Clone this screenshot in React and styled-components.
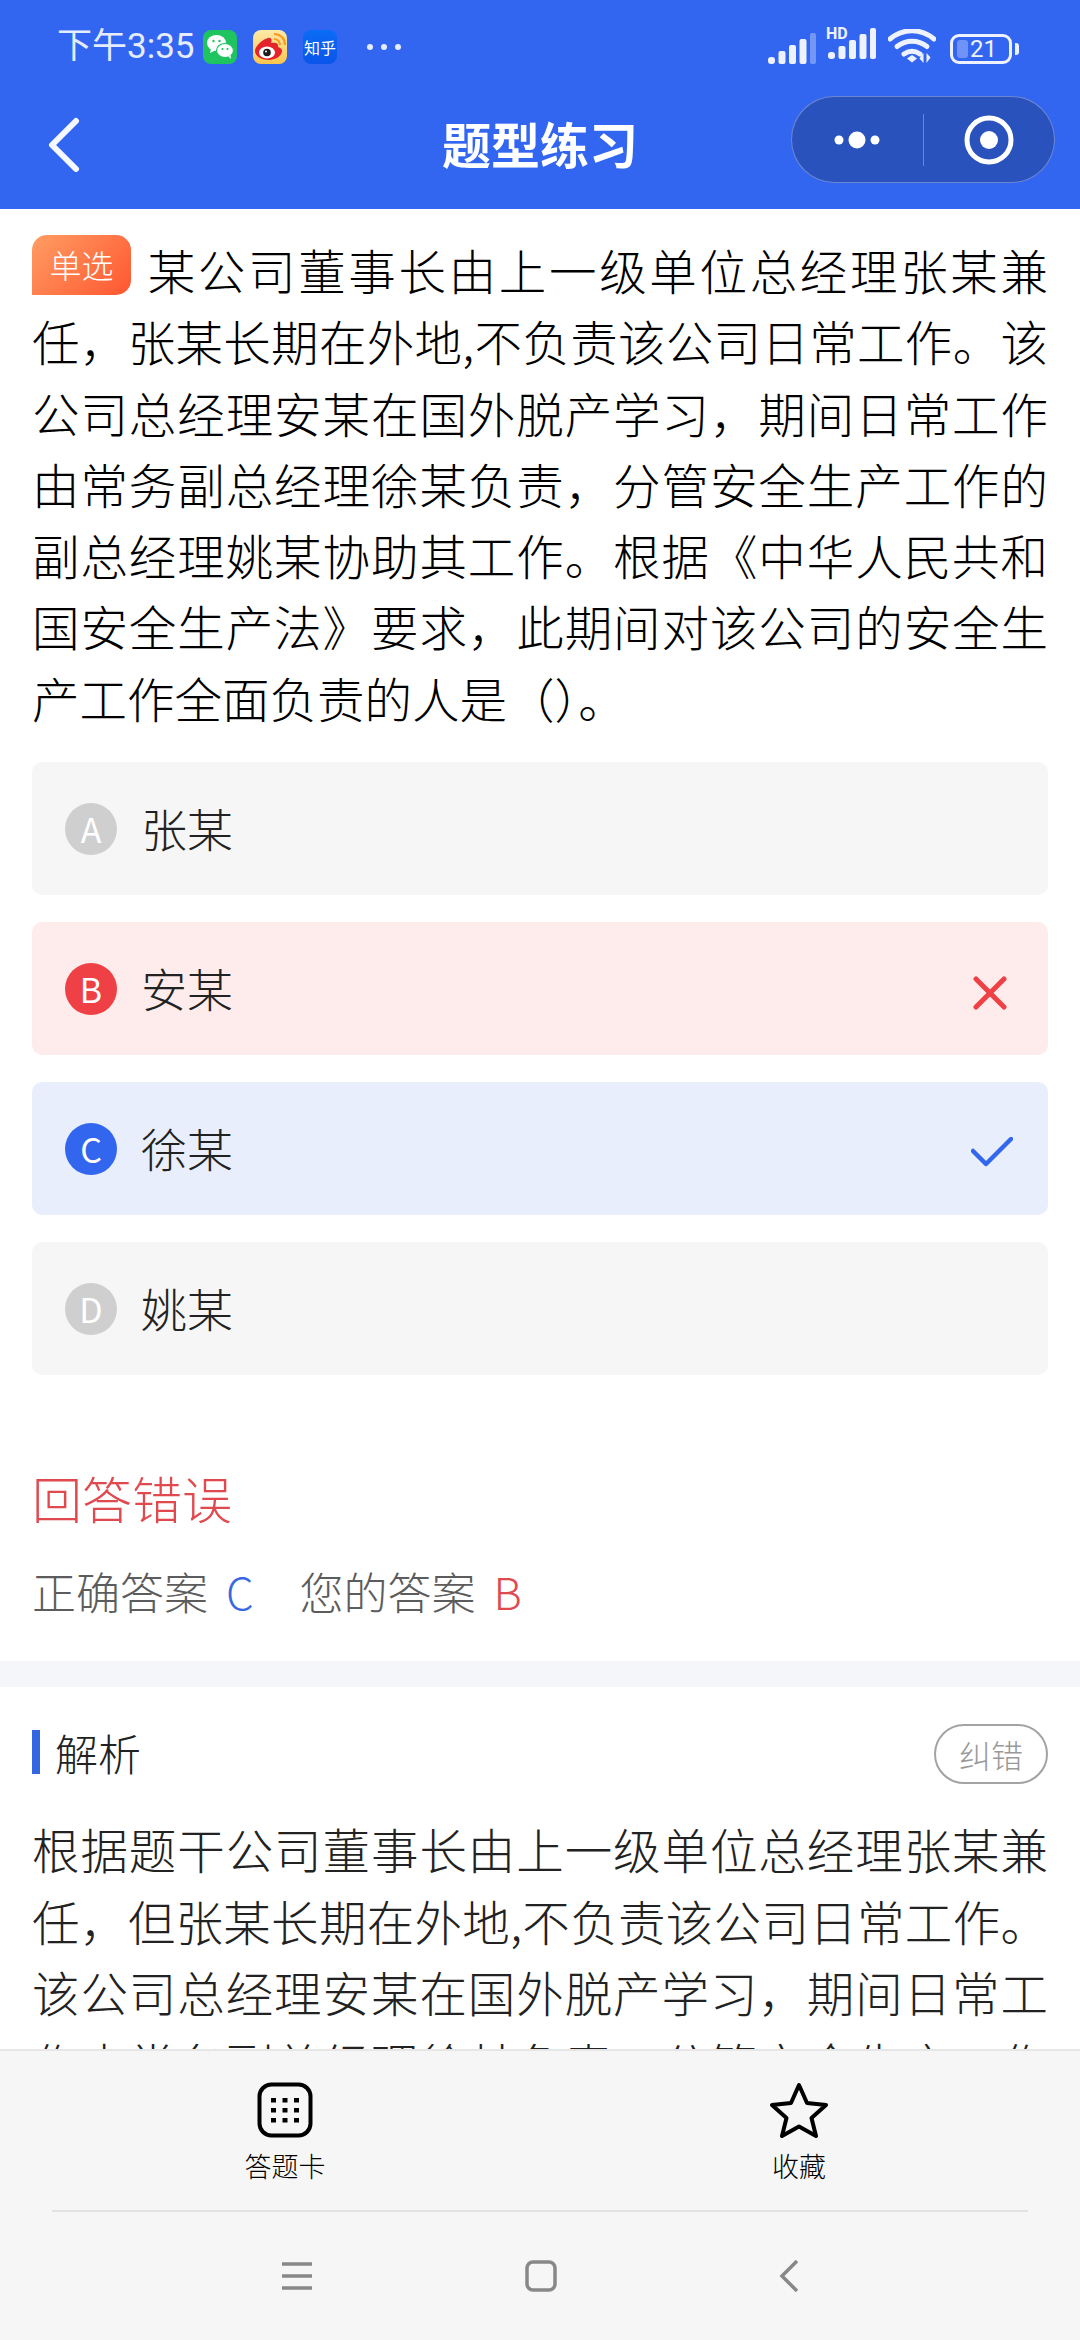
import React from "react";
import styled, { createGlobalStyle } from "styled-components";

const QUESTION =
  "某公司董事长由上一级单位总经理张某兼任，张某长期在外地,不负责该公司日常工作。该公司总经理安某在国外脱产学习，期间日常工作由常务副总经理徐某负责，分管安全生产工作的副总经理姚某协助其工作。根据《中华人民共和国安全生产法》要求，此期间对该公司的安全生产工作全面负责的人是（）。";
const ANALYSIS =
  "根据题干公司董事长由上一级单位总经理张某兼任，但张某长期在外地,不负责该公司日常工作。该公司总经理安某在国外脱产学习，期间日常工作由常务副总经理徐某负责，分管安全生产工作的副总经理姚某协助其工作。";

const OPTIONS = [
  { key: "A", text: "张某", state: "idle" },
  { key: "B", text: "安某", state: "wrong" },
  { key: "C", text: "徐某", state: "right" },
  { key: "D", text: "姚某", state: "idle" },
];

const optionBg = { idle: "#f6f6f6", wrong: "#feecec", right: "#e8eefb" };
const badgeBg = { idle: "#cfcfcf", wrong: "#ee4045", right: "#3366ee" };

function SignalIcon({ faded }) {
  return (
    <svg width="48" height="31" viewBox="0 0 48 31">
      <g fill="#eef2ff">
        <rect x="0" y="24" width="7" height="7" rx="3" />
        <rect x="10.500" y="18" width="7" height="13" rx="2" />
        <rect x="21" y="12" width="7" height="19" rx="2" />
        <rect x="31.500" y="6" width="7" height="25" rx="2" />
        <rect x="42" y="0" width="6" height="31" rx="2" opacity={faded ? 0.35 : 1} />
      </g>
    </svg>
  );
}

function App() {
  return (
    <Page>
      <GlobalStyle />
      <Header>
        <StatusBar>
          <StatusLeft>
            <Time>下午3:35</Time>
            <AppIcons>
              <AppIcon $bg="#1fc461">
                <svg width="34" height="34" viewBox="0 0 34 34">
                  <ellipse cx="13.500" cy="13" rx="9.500" ry="8" fill="#fff" />
                  <path d="M8 19l-1 4 5-2.500z" fill="#fff" />
                  <ellipse cx="22" cy="20.500" rx="8.500" ry="7" fill="#fff" stroke="#1fc461" strokeWidth="1.200" />
                  <path d="M25 26l3 3-.500-4z" fill="#fff" />
                  <circle cx="10.500" cy="11" r="1.200" fill="#1fc461" />
                  <circle cx="16.500" cy="11" r="1.200" fill="#1fc461" />
                  <circle cx="19.500" cy="19" r="1.100" fill="#1fc461" />
                  <circle cx="24.500" cy="19" r="1.100" fill="#1fc461" />
                </svg>
              </AppIcon>
              <AppIcon $bg="linear-gradient(180deg,#fde9a8,#fbc64c)">
                <svg width="34" height="34" viewBox="0 0 34 34">
                  <path d="M2 21c0-5 8-12 13-13 4-1 4 3 3 5 4-1 8 0 7 4 3 1 4 2 4 4 0 5-7 9-13 9-8 0-14-4-14-9z" fill="#e5232a" />
                  <ellipse cx="14" cy="22.500" rx="8" ry="6" fill="#fff" />
                  <circle cx="14" cy="22.500" r="3.800" fill="#1c1c1c" />
                  <circle cx="13" cy="21.500" r="1" fill="#fff" />
                  <path d="M21 9c3.500 0 6 2.500 6 6M21 4c6.500 0 11 4.500 11 11" stroke="#f59a23" strokeWidth="2.200" fill="none" />
                </svg>
              </AppIcon>
              <AppIcon $bg="linear-gradient(180deg,#0a6cf5,#0a55ea)">
                <ZhihuText>知乎</ZhihuText>
              </AppIcon>
            </AppIcons>
            <StatusDots>
              <i />
              <i />
              <i />
            </StatusDots>
          </StatusLeft>
          <StatusRight>
            <SignalIcon faded />
            <HdSignal>
              <HdLabel>HD</HdLabel>
              <SignalIcon />
            </HdSignal>
            <svg width="48" height="35" viewBox="0 0 48 35">
              <path d="M2 10c13-11 31-11 44 0" stroke="#eef2ff" strokeWidth="5" fill="none" strokeLinecap="round" />
              <path d="M9 17.500c9-7 21-7 30 0" stroke="#eef2ff" strokeWidth="5" fill="none" strokeLinecap="round" />
              <path d="M16 25c5-3.500 11-3.500 16 0" stroke="#eef2ff" strokeWidth="5" fill="none" strokeLinecap="round" />
              <path d="M19 29.500l5-3.500 5 3.500-5 4z" fill="#eef2ff" />
              <path d="M35.500 24v10l-4-4.500zM38.500 34V24l4 4.500z" fill="#eef2ff" />
            </svg>
            <Battery>
              <BatteryFill />
              <BatteryText>21</BatteryText>
              <BatteryTip />
            </Battery>
          </StatusRight>
        </StatusBar>
        <NavBar>
          <BackButton>
            <svg width="34" height="56" viewBox="0 0 34 56">
              <path d="M29 4L5 28l24 24" stroke="#f6f8ff" strokeWidth="6" fill="none" strokeLinecap="round" strokeLinejoin="round" />
            </svg>
          </BackButton>
          <Title>题型练习</Title>
          <Capsule>
            <CapsuleSide>
              <svg width="46" height="20" viewBox="0 0 46 20">
                <circle cx="5" cy="10" r="4.500" fill="#fff" />
                <circle cx="23" cy="10" r="8.500" fill="#fff" />
                <circle cx="41" cy="10" r="4.500" fill="#fff" />
              </svg>
            </CapsuleSide>
            <CapsuleDivider />
            <CapsuleSide>
              <svg width="50" height="50" viewBox="0 0 50 50">
                <circle cx="25" cy="25" r="22" stroke="#fff" strokeWidth="5" fill="none" />
                <circle cx="25" cy="25" r="9" fill="#fff" />
              </svg>
            </CapsuleSide>
          </Capsule>
        </NavBar>
      </Header>

      <QuestionBlock>
        <QuestionText>
          <Tag>单选</Tag>
          {QUESTION}
        </QuestionText>
        <OptionList>
          {OPTIONS.map((o) => (
            <Option key={o.key} $state={o.state}>
              <Badge $state={o.state}>{o.key}</Badge>
              <OptionText>{o.text}</OptionText>
              {o.state === "wrong" && (
                <ResultIcon $right={6} $top={9}>
                  <svg width="34" height="34" viewBox="0 0 34 34">
                    <path d="M3 3l28 28M31 3L3 31" stroke="#ee4045" strokeWidth="5" fill="none" strokeLinecap="round" />
                  </svg>
                </ResultIcon>
              )}
              {o.state === "right" && (
                <ResultIcon $right={0} $top={6}>
                  <svg width="42" height="30" viewBox="0 0 42 30">
                    <path d="M2 14l13 13L40 2" stroke="#3366ee" strokeWidth="4.500" fill="none" strokeLinecap="round" strokeLinejoin="round" />
                  </svg>
                </ResultIcon>
              )}
            </Option>
          ))}
        </OptionList>
      </QuestionBlock>

      <ResultBlock>
        <ResultTitle>回答错误</ResultTitle>
        <AnswerRow>
          <AnswerLabel>正确答案</AnswerLabel>
          <AnswerValue $color="#3a68e0">C</AnswerValue>
          <AnswerLabel>您的答案</AnswerLabel>
          <AnswerValue $color="#e04a4f">B</AnswerValue>
        </AnswerRow>
      </ResultBlock>

      <Strip />

      <AnalysisBlock>
        <AnalysisHead>
          <AnalysisTitle>解析</AnalysisTitle>
          <ReportButton>纠错</ReportButton>
        </AnalysisHead>
        <AnalysisText>{ANALYSIS}</AnalysisText>
      </AnalysisBlock>

      <BottomPanel>
        <ActionRow>
          <ActionItem>
            <svg width="56" height="56" viewBox="0 0 56 56">
              <rect x="2.500" y="2.500" width="51" height="51" rx="12" stroke="#000" strokeWidth="4" fill="none" />
              <g fill="#000">
                {[16, 26, 36].map((y) =>
                  [14, 25.500, 37].map((x) => <rect key={`${x}-${y}`} x={x} y={y} width="5" height="4.500" />)
                )}
              </g>
            </svg>
            <ActionLabel>答题卡</ActionLabel>
          </ActionItem>
          <ActionItem>
            <svg width="58" height="56" viewBox="0 0 58 56">
              <path
                d="M29 3l8 18 19 2-14.500 13L46 54 29 44.500 12 54l4.500-18L2 23l19-2z"
                stroke="#000"
                strokeWidth="4"
                fill="none"
                strokeLinejoin="round"
              />
            </svg>
            <ActionLabel>收藏</ActionLabel>
          </ActionItem>
        </ActionRow>
        <PanelRule />
        <SystemNav>
          <svg width="30" height="28" viewBox="0 0 30 28">
            <path d="M0 2h30M0 14h30M0 26h30" stroke="#888" strokeWidth="3.500" />
          </svg>
          <svg width="32" height="32" viewBox="0 0 32 32">
            <rect x="2" y="2" width="28" height="28" rx="6" stroke="#888" strokeWidth="3.500" fill="none" />
          </svg>
          <svg width="20" height="32" viewBox="0 0 20 32">
            <path d="M18 1L3 16l15 15" stroke="#888" strokeWidth="3.500" fill="none" />
          </svg>
        </SystemNav>
      </BottomPanel>
    </Page>
  );
}

const GlobalStyle = createGlobalStyle`
  html, body {
    margin: 0;
    padding: 0;
    background: #fff;
  }
  * {
    box-sizing: border-box;
  }
`;

const Page = styled.div`
  width: 1080px;
  height: 2340px;
  overflow: hidden;
  background: #fff;
  display: flex;
  flex-direction: column;
  font-family: "Noto Sans CJK SC", "Noto Sans", sans-serif;
`;

const Header = styled.header`
  flex: none;
  height: 209px;
  background: #3366f0;
  display: flex;
  flex-direction: column;
`;

const StatusBar = styled.div`
  height: 96px;
  padding: 30px 68px 0 57px;
  display: flex;
  justify-content: space-between;
  align-items: flex-start;
`;

const StatusLeft = styled.div`
  display: flex;
  align-items: center;
  height: 34px;
`;

const Time = styled.span`
  width: 146px;
  font-family: Roboto, "Noto Sans CJK SC", sans-serif;
  font-size: 35px;
  line-height: 34px;
  color: #e6ecff;
  white-space: nowrap;
`;

const AppIcons = styled.div`
  display: flex;
  gap: 16px;
`;

const AppIcon = styled.div`
  width: 34px;
  height: 34px;
  border-radius: 8px;
  overflow: hidden;
  background: ${(p) => p.$bg};
  display: flex;
  align-items: center;
  justify-content: center;
`;

const ZhihuText = styled.span`
  font-size: 16px;
  line-height: 1;
  color: #fff;
  white-space: nowrap;
`;

const StatusDots = styled.div`
  display: flex;
  gap: 8px;
  margin-left: 30px;
  i {
    width: 6px;
    height: 6px;
    border-radius: 50%;
    background: #e6ecff;
  }
`;

const StatusRight = styled.div`
  display: flex;
  align-items: flex-end;
  height: 34px;
  gap: 12px;
`;

const HdSignal = styled.div`
  position: relative;
`;

const HdLabel = styled.span`
  position: absolute;
  left: -2px;
  top: -1px;
  font-family: Roboto, sans-serif;
  font-size: 16px;
  font-weight: 700;
  line-height: 13px;
  color: #eef2ff;
`;

const Battery = styled.div`
  position: relative;
  width: 62px;
  height: 30px;
  margin-left: 2px;
  border: 3px solid #eef2ff;
  border-radius: 9px;
  display: flex;
  align-items: center;
  padding-left: 4px;
`;

const BatteryFill = styled.div`
  width: 11px;
  height: 18px;
  border-radius: 3px;
  background: #6f93f6;
`;

const BatteryText = styled.span`
  margin-left: 2px;
  font-family: Roboto, sans-serif;
  font-size: 24px;
  line-height: 24px;
  color: #eef2ff;
`;

const BatteryTip = styled.span`
  position: absolute;
  right: -10px;
  top: 6px;
  width: 4px;
  height: 12px;
  border-radius: 0 3px 3px 0;
  background: #eef2ff;
`;

const NavBar = styled.div`
  flex: 1;
  position: relative;
  display: flex;
  align-items: flex-start;
  justify-content: space-between;
  padding-right: 25px;
`;

const BackButton = styled.div`
  margin: 21px 0 0 47px;
  line-height: 0;
`;

const Title = styled.h1`
  position: absolute;
  left: 0;
  right: 0;
  top: 12px;
  margin: 0;
  text-align: center;
  font-size: 49px;
  line-height: 70px;
  font-weight: 700;
  color: #fff;
  pointer-events: none;
`;

const Capsule = styled.div`
  width: 264px;
  height: 87px;
  border-radius: 44px;
  background: #2a52bd;
  border: 1px solid rgba(255, 255, 255, 0.3);
  display: flex;
  align-items: center;
`;

const CapsuleSide = styled.div`
  flex: 1;
  display: flex;
  align-items: center;
  justify-content: center;
  line-height: 0;
`;

const CapsuleDivider = styled.div`
  width: 1px;
  height: 52px;
  background: rgba(255, 255, 255, 0.3);
`;

const QuestionBlock = styled.section`
  flex: none;
  padding: 25px 32px 0;
`;

const QuestionText = styled.p`
  margin: 0;
  font-size: 47.500px;
  font-weight: 300;
  line-height: 71.300px;
  color: #000;
  text-align: justify;
`;

const Tag = styled.span`
  display: inline-block;
  width: 99px;
  height: 60px;
  margin-right: 14px;
  border-radius: 15px 15px 15px 0;
  background: linear-gradient(135deg, #ff9d63, #ff5630);
  color: #fff;
  font-size: 32px;
  line-height: 58px;
  text-align: center;
  vertical-align: 12px;
`;

const OptionList = styled.div`
  margin-top: 29px;
  display: flex;
  flex-direction: column;
  gap: 27px;
`;

const Option = styled.div`
  height: 133px;
  padding: 0 35px 0 33px;
  border-radius: 10px;
  background: ${(p) => optionBg[p.$state]};
  display: flex;
  align-items: center;
`;

const Badge = styled.span`
  width: 52px;
  height: 52px;
  border-radius: 50%;
  background: ${(p) => badgeBg[p.$state]};
  color: #fff;
  font-size: 34px;
  line-height: 52px;
  text-align: center;
`;

const OptionText = styled.span`
  margin: 0 0 4px 24px;
  font-size: 46px;
  font-weight: 300;
  line-height: 60px;
  color: #222;
`;

const ResultIcon = styled.span`
  margin-left: auto;
  margin-right: ${(p) => p.$right}px;
  margin-top: ${(p) => p.$top}px;
  line-height: 0;
`;

const ResultBlock = styled.section`
  flex: none;
  padding: 88px 32px 0;
  height: 286px;
`;

const ResultTitle = styled.div`
  font-size: 50px;
  font-weight: 300;
  line-height: 68px;
  color: #e04a4f;
`;

const AnswerRow = styled.div`
  margin-top: 28px;
  display: flex;
  align-items: center;
  font-size: 44px;
  font-weight: 300;
  line-height: 64px;
`;

const AnswerLabel = styled.span`
  color: #5c5c5c;
`;

const AnswerValue = styled.span`
  margin: 0 46px 0 18px;
  color: ${(p) => p.$color};
`;

const Strip = styled.div`
  flex: none;
  height: 26px;
  background: #f4f6f9;
`;

const AnalysisBlock = styled.section`
  flex: 1;
  min-height: 0;
  overflow: hidden;
  padding: 37px 32px 0;
`;

const AnalysisHead = styled.div`
  display: flex;
  align-items: center;
  justify-content: space-between;
  height: 60px;
`;

const AnalysisTitle = styled.h2`
  margin: 0 0 4px;
  padding-left: 15px;
  border-left: 8px solid #3366e0;
  font-size: 43px;
  line-height: 44px;
  font-weight: 300;
  color: #222;
`;

const ReportButton = styled.div`
  width: 114px;
  height: 60px;
  border: 2px solid #a3a3a3;
  border-radius: 30px;
  color: #999;
  font-size: 32px;
  font-weight: 300;
  line-height: 56px;
  text-align: center;
`;

const AnalysisText = styled.p`
  margin: 29px 0 0;
  font-size: 47.500px;
  font-weight: 300;
  line-height: 71.500px;
  color: #222;
  text-align: justify;
`;

const BottomPanel = styled.footer`
  flex: none;
  height: 291px;
  background: #f6f6f6;
  border-top: 2px solid #e6e6e6;
`;

const ActionRow = styled.div`
  height: 159px;
  padding-top: 31px;
  display: grid;
  grid-template-columns: 570px 458px;
`;

const ActionItem = styled.div`
  display: flex;
  flex-direction: column;
  align-items: center;
  svg {
    display: block;
  }
`;

const ActionLabel = styled.span`
  margin-top: 8px;
  font-size: 27px;
  font-weight: 300;
  line-height: 40px;
  color: #000;
`;

const PanelRule = styled.div`
  height: 2px;
  margin: 0 52px;
  background: #e2e2e2;
`;

const SystemNav = styled.div`
  padding-top: 48px;
  display: grid;
  grid-template-columns: 282px 30px 213px 32px 222px 20px;
  align-items: center;
  svg:nth-child(1) {
    grid-column: 2;
  }
  svg:nth-child(2) {
    grid-column: 4;
  }
  svg:nth-child(3) {
    grid-column: 6;
  }
`;

export default App;
